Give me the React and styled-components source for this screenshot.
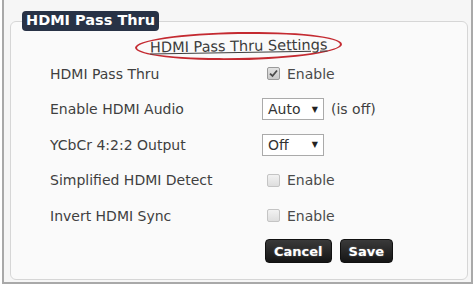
import styled, { createGlobalStyle } from "styled-components";

const GlobalStyle = createGlobalStyle`
  html, body {
    margin: 0;
    padding: 0;
    background: #ffffff;
  }
  body {
    font-family: "DejaVu Sans", Verdana, sans-serif;
  }
`;

const rows = [
  { label: "HDMI Pass Thru", kind: "check", checked: true },
  { label: "Enable HDMI Audio", kind: "select", value: "Auto", note: "(is off)" },
  { label: "YCbCr 4:2:2 Output", kind: "select", value: "Off" },
  { label: "Simplified HDMI Detect", kind: "check", checked: false },
  { label: "Invert HDMI Sync", kind: "check", checked: false },
];

export default function App() {
  return (
    <>
      <GlobalStyle />
      <Frame>
        <Panel>
          <Legend>HDMI Pass Thru</Legend>
          <TitleRow>
            <Circled>
              <TitleLink href="#">HDMI Pass Thru Settings</TitleLink>
            </Circled>
          </TitleRow>
          <Form>
            {rows.map((row) => (
              <Row key={row.label}>
                <Label>{row.label}</Label>
                <Control>
                  {row.kind === "check" ? (
                    <>
                      <Check checked={row.checked}>
                        {row.checked && (
                          <svg width="9" height="9" viewBox="0 0 9 9">
                            <path
                              d="M1 4.6 L3.5 7 L8 1.5"
                              fill="none"
                              stroke="#4a4a4a"
                              strokeWidth="1.8"
                            />
                          </svg>
                        )}
                      </Check>
                      <CheckText>Enable</CheckText>
                    </>
                  ) : (
                    <>
                      <Select>
                        <span>{row.value}</span>
                        <Arrow>▼</Arrow>
                      </Select>
                      {row.note && <Note>{row.note}</Note>}
                    </>
                  )}
                </Control>
              </Row>
            ))}
            <Row>
              <span />
              <Buttons>
                <Button>Cancel</Button>
                <Button>Save</Button>
              </Buttons>
            </Row>
          </Form>
        </Panel>
      </Frame>
    </>
  );
}

const Frame = styled.div`
  box-sizing: border-box;
  margin-left: 2px;
  width: 471px;
  height: 284px;
  border: 2px solid #a9a9a9;
  border-top: none;
  background: #f6f6f6;
  padding: 0 3px 2px 6px;
  display: flex;
`;

const Panel = styled.fieldset`
  box-sizing: border-box;
  flex: 1;
  margin: 11px 0 0 0;
  padding: 0;
  border: 1px solid #d6d6d6;
  border-radius: 6px;
  background: #fafafa;
  min-width: 0;
`;

const Legend = styled.legend`
  margin-left: 11px;
  padding: 1px 4px 2px;
  height: 17px;
  line-height: 17px;
  background: #283246;
  color: #ffffff;
  font-weight: bold;
  font-size: 14.5px;
  border-radius: 4px;
`;

const TitleRow = styled.div`
  display: flex;
  justify-content: center;
  margin: 1px 0 -4px;
`;

const Circled = styled.span`
  display: inline-block;
  border: 2.5px solid #c42a31;
  border-radius: 50%;
  padding: 3px 13px;
  line-height: 17px;
  transform: rotate(-1deg);
`;

const TitleLink = styled.a`
  color: #3c3c3c;
  font-size: 14.5px;
  text-decoration: underline;
`;

const Form = styled.div`
  display: grid;
  grid-template-columns: 212px 1fr;
  grid-auto-rows: 35.5px;
  padding-left: 39px;
`;

const Row = styled.div`
  display: contents;
`;

const Label = styled.span`
  align-self: center;
  font-size: 14px;
  color: #3f3f3f;
`;

const Control = styled.div`
  display: flex;
  align-items: center;
  font-size: 14px;
  color: #3f3f3f;
`;

const Check = styled.span`
  box-sizing: border-box;
  width: 13px;
  height: 13px;
  margin-left: 5px;
  border: 1px solid ${(p) => (p.checked ? "#9a9a9a" : "#c4c4c4")};
  border-radius: 2px;
  background: ${(p) =>
    p.checked
      ? "linear-gradient(#e2e2e2, #c9c9c9)"
      : "linear-gradient(#f2f2f2, #dedede)"};
  display: flex;
  align-items: center;
  justify-content: center;
`;

const CheckText = styled.span`
  margin-left: 7px;
  color: #4a4a4a;
`;

const Select = styled.span`
  box-sizing: border-box;
  width: 62px;
  height: 22px;
  padding: 0 5px 0 5px;
  border: 1px solid #aaaaaa;
  background: #ffffff;
  display: flex;
  align-items: center;
  justify-content: space-between;
  color: #333333;
`;

const Arrow = styled.span`
  font-size: 8px;
  color: #222222;
`;

const Note = styled.span`
  margin-left: 7px;
  color: #3f3f3f;
`;

const Buttons = styled.div`
  display: flex;
  align-items: center;
  gap: 8px;
  padding-left: 3px;
`;

const Button = styled.button`
  height: 24px;
  padding: 0 8px;
  border: 1px solid #111111;
  border-radius: 4px;
  background: linear-gradient(#3a3a3a, #151515);
  color: #ffffff;
  font-family: "DejaVu Sans", Verdana, sans-serif;
  font-weight: bold;
  font-size: 13px;
  text-shadow: 0 0 2px rgba(255, 255, 255, 0.35);
  cursor: pointer;
`;
